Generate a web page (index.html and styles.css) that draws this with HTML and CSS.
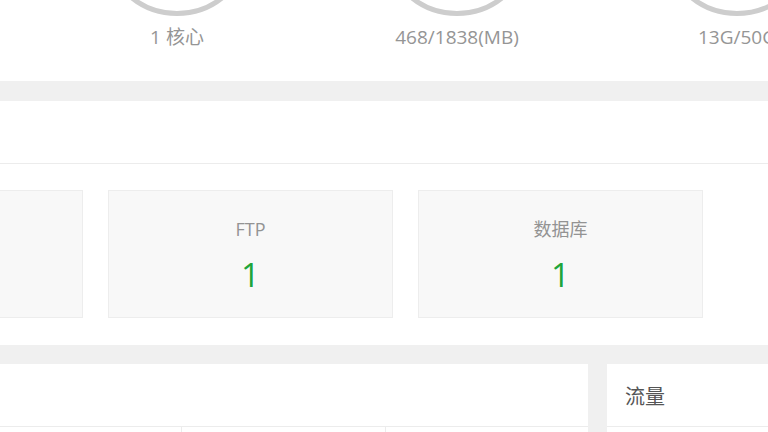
FILE: index.html
```html
<!DOCTYPE html>
<html lang="zh-CN">
<head>
<meta charset="utf-8">
<title>首页</title>
<link rel="stylesheet" href="styles.css">
</head>
<body>
<section class="state">
  <div class="state-row">
    <div class="state-item">
      <div class="ring"></div>
    </div>
    <div class="state-item">
      <div class="ring"></div>
      <p class="state-text">1 核心</p>
    </div>
    <div class="state-item">
      <div class="ring"></div>
      <p class="state-text">468/1838(MB)</p>
    </div>
    <div class="state-item">
      <div class="ring"></div>
      <p class="state-text">13G/50G</p>
    </div>
  </div>
</section>

<section class="overview">
  <div class="panel-head"></div>
  <div class="cards">
    <div class="card"></div>
    <div class="card">
      <p class="card-name">FTP</p>
      <p class="card-num">1</p>
    </div>
    <div class="card">
      <p class="card-name">数据库</p>
      <p class="card-num">1</p>
    </div>
  </div>
</section>

<section class="bottom">
  <div class="soft">
    <div class="panel-head"></div>
    <div class="soft-row">
      <div class="soft-cell"></div>
      <div class="soft-cell"></div>
      <div class="soft-cell"></div>
    </div>
  </div>
  <div class="flow">
    <div class="flow-head">流量</div>
  </div>
</section>
</body>
</html>
```

FILE: styles.css
```css
html, body {
  margin: 0;
  padding: 0;
}

body {
  background: #f0f0f0;
  font-family: "Open Sans", "Noto Sans CJK SC", sans-serif;
  overflow: hidden;
  height: 432px;
}

p {
  margin: 0;
}

.state {
  background: #fff;
  height: 81px;
  overflow: hidden;
  margin-bottom: 20px;
}

.state-row {
  display: flex;
  margin-left: -243px;
}

.state-item {
  flex: 0 0 280px;
  display: flex;
  flex-direction: column;
  align-items: center;
}

.ring {
  width: 150px;
  height: 150px;
  box-sizing: border-box;
  border: 5px solid #cdcdcd;
  border-radius: 50%;
  margin-top: -134px;
}

.state-text {
  margin-top: 8px;
  font-size: 19px;
  line-height: 26px;
  color: #959595;
  white-space: nowrap;
}

.overview {
  background: #fff;
  height: 244px;
  margin-bottom: 19px;
  overflow: hidden;
}

.panel-head {
  height: 62px;
  border-bottom: 1px solid #ececec;
}

.cards {
  display: flex;
  gap: 25px;
  margin-left: -202px;
  padding-top: 26px;
}

.card {
  flex: 0 0 285px;
  box-sizing: border-box;
  height: 128px;
  background: #f8f8f8;
  border: 1px solid #ededed;
  text-align: center;
  padding-top: 26px;
}

.card-name {
  font-size: 18px;
  line-height: 24px;
  color: #939393;
}

.card-num {
  margin-top: 14px;
  font-size: 33px;
  line-height: 40px;
  color: #20a53a;
}

.bottom {
  display: flex;
  gap: 19px;
  height: 68px;
}

.soft {
  flex: 0 0 588px;
  background: #fff;
}

.soft-row {
  display: grid;
  grid-template-columns: 182px 204px 1fr;
  height: 10px;
}

.soft-cell {
  border-right: 1px solid #ececec;
}

.soft-cell:last-child {
  border-right: none;
}

.flow {
  flex: 1;
  background: #fff;
}

.flow-head {
  box-sizing: border-box;
  height: 63px;
  padding: 3px 0 0 18px;
  border-bottom: 1px solid #ececec;
  font-size: 20px;
  line-height: 59px;
  color: #555;
}
```
